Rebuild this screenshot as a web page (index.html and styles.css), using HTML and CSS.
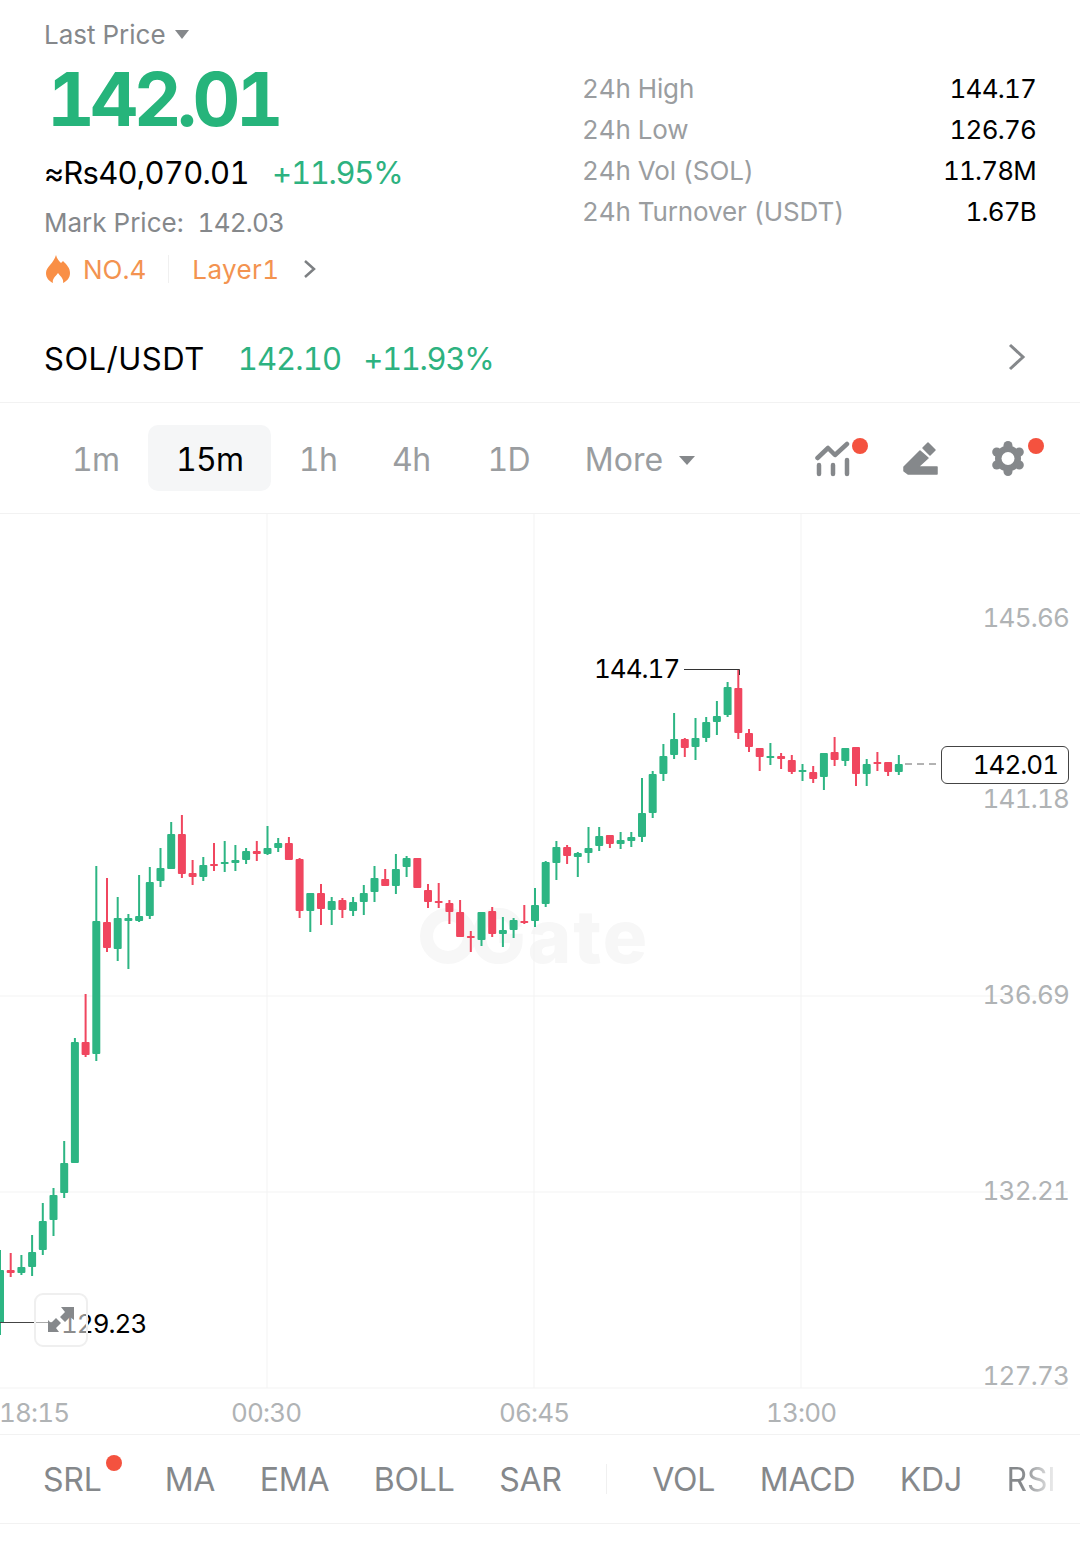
FILE: index.html
```html
<!DOCTYPE html>
<html lang="en">
<head>
  <meta charset="UTF-8">
  <meta name="viewport" content="width=device-width, initial-scale=1.0">
  <title>SOL/USDT Perpetual</title>
  <link rel="stylesheet" href="styles.css">
</head>
<body>
  <section class="summary">
    <div class="summary-left">
      <div class="last-price">Last Price <span class="caret caret-small"></span></div>
      <div class="big-price">142.01</div>
      <div class="convert">
        <span class="convert-value">≈Rs40,070.01</span>
        <span class="green change">+11.95%</span>
      </div>
      <div class="mark-price">Mark Price:&nbsp; <span class="num">142.03</span></div>
      <div class="tags">
        <svg class="fire" width="24" height="28" viewBox="0 0 24 28">
          <path d="M10 0C11 4 13 6 15 8L17 6C21 10 24 13 24 18C24 23 21 26 17 28C18 24 15 22 12 18C9 22 6 24 7 28C3 26 0 23 0 18C0 12 8 8 10 0z"/>
        </svg>
        <span class="tag-text">NO.4</span>
        <span class="tag-divider"></span>
        <span class="tag-text tag-layer">Layer1</span>
        <svg class="chevron-small" width="14" height="20" viewBox="0 0 14 20">
          <path d="M2 2l9 8-9 8"/>
        </svg>
      </div>
    </div>
    <div class="stats">
      <span class="stat-label">24h High</span><span class="stat-value">144.17</span>
      <span class="stat-label">24h Low</span><span class="stat-value">126.76</span>
      <span class="stat-label">24h Vol (SOL)</span><span class="stat-value">11.78M</span>
      <span class="stat-label">24h Turnover (USDT)</span><span class="stat-value">1.67B</span>
    </div>
  </section>

  <section class="pair-row">
    <span class="pair-name">SOL/USDT</span>
    <span class="green pair-price">142.10</span>
    <span class="green change">+11.93%</span>
    <svg class="chevron-large" width="18" height="28" viewBox="0 0 18 28">
      <path d="M2 2l13 12-13 12"/>
    </svg>
  </section>

  <nav class="toolbar">
    <span class="tab tab-1m">1m</span>
    <span class="tab tab-active">15m</span>
    <span class="tab tab-1h">1h</span>
    <span class="tab tab-4h">4h</span>
    <span class="tab tab-1d">1D</span>
    <span class="tab tab-more">More <span class="caret"></span></span>
    <div class="tool-icons">
      <svg class="tool-icon" width="54" height="40" viewBox="0 0 54 40">
        <path class="icon-line" d="M2.500 20L13 10l7 7L32 6"/>
        <path class="icon-line" d="M4 27v9M18 27v9M32 22v14"/>
        <circle class="icon-dot" cx="45" cy="8" r="8"/>
      </svg>
      <svg class="tool-icon tool-pencil" width="36" height="40" viewBox="0 0 36 40">
        <path class="icon-solid" d="M1 29l16-16 8 7-10 9h19v7H5l-4-3zM20 10l5-5 7 7-5 5z"/>
      </svg>
      <svg class="tool-icon" width="54" height="40" viewBox="0 0 54 40">
        <circle class="icon-fill" cx="16" cy="20.500" r="13"/>
        <circle class="icon-fill" cx="16" cy="7.500" r="4.500"/>
        <circle class="icon-fill" cx="16" cy="33.500" r="4.500"/>
        <circle class="icon-fill" cx="4.700" cy="14" r="4.500"/>
        <circle class="icon-fill" cx="27.300" cy="14" r="4.500"/>
        <circle class="icon-fill" cx="4.700" cy="27" r="4.500"/>
        <circle class="icon-fill" cx="27.300" cy="27" r="4.500"/>
        <circle cx="16" cy="20.500" r="6.500" fill="#fff"/>
        <circle class="icon-dot" cx="44" cy="8" r="8"/>
      </svg>
    </div>
  </nav>

  <section class="chart">
    <div class="watermark"><span class="watermark-ring"></span>Gate</div>
    <svg id="candles" class="candles" width="1080" height="920" viewBox="0 514 1080 920"></svg>

    <span class="axis-label axis-1">145.66</span>
    <span class="axis-label axis-2">141.18</span>
    <span class="axis-label axis-3">136.69</span>
    <span class="axis-label axis-4">132.21</span>
    <span class="axis-label axis-5">127.73</span>

    <span class="high-label">144.17</span>
    <span class="low-label">129.23</span>
    <div class="last-box">142.01</div>
    <button class="expand">
      <svg width="28" height="28" viewBox="0 0 28 28">
        <path d="M14 1h13v13l-4-3-5 5-5-5 5-5zM1 14l3 3 5-5 5 5-5 5 3 4H1z"/>
      </svg>
    </button>

    <div class="time-axis">
      <span class="time time-1">18:15</span>
      <span class="time time-2">00:30</span>
      <span class="time time-3">06:45</span>
      <span class="time time-4">13:00</span>
    </div>
  </section>

  <nav class="indicators">
    <span class="ind ind-srl">SRL<i class="ind-dot"></i></span>
    <span class="ind">MA</span>
    <span class="ind">EMA</span>
    <span class="ind">BOLL</span>
    <span class="ind">SAR</span>
    <span class="ind-divider"></span>
    <span class="ind">VOL</span>
    <span class="ind">MACD</span>
    <span class="ind">KDJ</span>
    <span class="ind ind-fade">RSI</span>
  </nav>

  <script src="chart.js"></script>
</body>
</html>
```

FILE: styles.css
```css
body {
  font-family: Inter, "Liberation Sans", sans-serif;
  font-variant-numeric: tabular-nums;
  margin: 0;
  padding: 0;
  background-color: #fff;
  color: #000;
  width: 1080px;
  overflow-x: hidden;
}
.green {
  color: #2db280;
}
.change {
  letter-spacing: -1.300px;
}
.num {
  letter-spacing: -0.800px;
}
.caret {
  display: inline-block;
  width: 0;
  height: 0;
  border-left: 8px solid transparent;
  border-right: 8px solid transparent;
  border-top: 9px solid #85888b;
  vertical-align: 6px;
  margin-left: 7px;
}
.caret-small {
  border-left-width: 7px;
  border-right-width: 7px;
  border-top-width: 9px;
  margin-left: 2px;
  vertical-align: 5px;
}

/* top summary */
.summary {
  display: flex;
  justify-content: space-between;
  height: 316px;
  padding: 0 44px;
  box-sizing: border-box;
}
.last-price {
  margin-top: 18px;
  font-size: 26px;
  line-height: 34px;
  color: #85888b;
}
.big-price {
  margin-top: 2px;
  margin-left: 3px;
  font-size: 74px;
  line-height: 90px;
  font-weight: 700;
  letter-spacing: -4.500px;
  color: #26b47b;
}
.convert {
  margin-top: 9px;
  font-size: 31px;
  line-height: 40px;
}
.convert-value {
  margin-right: 15px;
  letter-spacing: -0.750px;
}
.mark-price {
  margin-top: 12px;
  font-size: 26px;
  line-height: 36px;
  color: #85888b;
}
.tags {
  display: flex;
  align-items: center;
  margin-top: 10px;
  height: 36px;
  font-size: 26px;
  color: #f39350;
}
.tag-layer {
  letter-spacing: 0.400px;
}
.fire {
  margin: 0 13px 0 2px;
  fill: #f98f46;
}
.tag-divider {
  width: 1px;
  height: 28px;
  background-color: #f0f0f0;
  margin: 0 23px 0 22px;
}
.chevron-small {
  margin-left: 23px;
  fill: none;
  stroke: #7d8083;
  stroke-width: 2.500;
}
.stats {
  display: grid;
  grid-template-columns: 1fr auto;
  grid-auto-rows: 41px;
  align-content: start;
  width: 454px;
  margin-top: 68px;
  font-size: 26px;
  line-height: 41px;
}
.stat-label {
  color: #9a9da0;
  letter-spacing: -0.100px;
}
.stat-value {
  text-align: right;
  letter-spacing: -0.800px;
}

/* pair row */
.pair-row {
  display: flex;
  align-items: center;
  height: 84px;
  padding: 0 44px 2px;
  font-size: 31px;
  border-bottom: 1px solid #f2f2f2;
}
.pair-name {
  margin-right: 33px;
  letter-spacing: 0.500px;
}
.pair-price {
  margin-right: 22px;
  letter-spacing: -0.900px;
}
.chevron-large {
  margin-left: auto;
  margin-right: 10px;
  margin-bottom: 2px;
  fill: none;
  stroke: #85888b;
  stroke-width: 3;
}

/* timeframe toolbar */
.toolbar {
  display: flex;
  align-items: center;
  height: 110px;
  font-size: 32px;
  color: #9a9da0;
  border-bottom: 1px solid #f2f2f2;
}
.tab {
  height: 66px;
  line-height: 70px;
  letter-spacing: -0.700px;
}
.tab-1m {
  margin-left: 72px;
}
.tab-active {
  margin-left: 29px;
  padding: 0 27.500px;
  background-color: #f5f6f7;
  border-radius: 10px;
  color: #000;
}
.tab-1h {
  margin-left: 28px;
}
.tab-4h {
  margin-left: 55px;
}
.tab-1d {
  margin-left: 57px;
}
.tab-more {
  margin-left: 55px;
  letter-spacing: 0;
}
.tool-icons {
  display: flex;
  align-items: center;
  margin-left: auto;
  margin-right: 34px;
}
.tool-pencil {
  margin: 0 53px 0 34px;
}
.icon-line {
  fill: none;
  stroke: #85888b;
  stroke-width: 4.500;
  stroke-linecap: round;
  stroke-linejoin: round;
}
.icon-fill {
  fill: #85888b;
}
.icon-solid {
  fill: #85888b;
  stroke: #85888b;
  stroke-width: 1.500;
  stroke-linejoin: round;
}
.icon-dot {
  fill: #f4523f;
}

/* chart */
.chart {
  position: relative;
  height: 921px;
  border-bottom: 1px solid #f2f2f2;
  box-sizing: border-box;
}
.candles {
  position: absolute;
  left: 0;
  top: 0;
}
.watermark {
  position: absolute;
  left: 420px;
  top: 377px;
  display: flex;
  align-items: center;
  font-size: 74px;
  line-height: 90px;
  font-weight: 800;
  letter-spacing: 2px;
  color: #f7f7f7;
}
.watermark-ring {
  width: 56px;
  height: 56px;
  margin-right: -6px;
  box-sizing: border-box;
  border: 13px solid #f7f7f7;
  border-radius: 50%;
}
.axis-label {
  position: absolute;
  right: 11px;
  font-size: 26px;
  line-height: 32px;
  letter-spacing: -0.800px;
  color: #b0b3b5;
}
.axis-1 { top: 88px; }
.axis-2 { top: 269px; }
.axis-3 { top: 465px; }
.axis-4 { top: 661px; }
.axis-5 { top: 846px; }
.high-label,
.low-label {
  position: absolute;
  font-size: 26px;
  line-height: 32px;
  letter-spacing: -1px;
}
.high-label {
  left: 594px;
  top: 139px;
}
.low-label {
  left: 61px;
  top: 794px;
}
.last-box {
  position: absolute;
  left: 941px;
  top: 232px;
  width: 128px;
  height: 38px;
  box-sizing: border-box;
  padding-right: 10px;
  border: 1px solid #444;
  border-radius: 6px;
  background-color: #fff;
  font-size: 26px;
  line-height: 36px;
  letter-spacing: -1px;
  text-align: right;
}
.expand {
  position: absolute;
  left: 34px;
  top: 779px;
  width: 54px;
  height: 54px;
  padding: 0;
  display: flex;
  align-items: center;
  justify-content: center;
  border: 2px solid #efefef;
  border-radius: 9px;
  background-color: rgba(255, 255, 255, 0.55);
}
.expand svg {
  fill: #85888b;
}
.time-axis {
  position: absolute;
  left: 0;
  right: 0;
  top: 874px;
  height: 46px;
  font-size: 26px;
  line-height: 50px;
  letter-spacing: -0.800px;
  color: #b0b3b5;
}
.time {
  position: absolute;
  top: 0;
}
.time-1 { left: -1px; }
.time-2 { left: 231px; }
.time-3 { left: 499px; }
.time-4 { left: 766px; }

/* indicator row */
.indicators {
  display: flex;
  align-items: center;
  height: 88px;
  padding-left: 43px;
  font-size: 32px;
  letter-spacing: -0.200px;
  color: #85888b;
  border-bottom: 1px solid #f2f2f2;
  overflow: hidden;
  white-space: nowrap;
}
.ind {
  margin-right: 44.500px;
}
.ind-srl {
  position: relative;
  margin-right: 63px;
}
.ind-dot {
  position: absolute;
  left: 63px;
  top: -5px;
  width: 16px;
  height: 16px;
  border-radius: 50%;
  background-color: #f4523f;
}
.ind-divider {
  width: 1px;
  height: 30px;
  background-color: #f0f0f0;
  margin-right: 45px;
}
.ind-fade {
  margin: 0;
  background: linear-gradient(90deg, #85888b 30%, #f4f4f4 100%);
  -webkit-background-clip: text;
  background-clip: text;
  color: transparent;
}
```

FILE: chart.js
```js
// each candle: [colour, wick top, wick bottom, body top, body bottom]
const candles = [
  ['g',1250,1335,1270,1323],['r',1253,1277,1270,1273],['g',1255,1275,1267,1273],['g',1235,1276,1252,1267],
  ['g',1203,1255,1221,1250],['g',1188,1236,1195,1220],['g',1141,1198,1163,1193],['g',1038,1163,1042,1163],
  ['r',994,1057,1042,1055],['g',866,1061,921,1054],['r',878,952,922,948],['g',897,961,918,949],
  ['g',914,969,918,921],['g',875,922,916,921],['g',867,919,882,916],['g',848,887,868,881],
  ['g',822,869,834,869],['r',815,878,834,874],['r',860,885,873,877],['g',857,881,865,877],
  ['r',843,871,864,866],['g',841,872,862,864],['g',845,871,860,863],['g',848,864,851,860],
  ['r',841,861,851,854],['g',826,855,848,854],['g',838,852,843,848],['r',837,860,843,860],
  ['r',858,918,859,911],['g',893,932,893,911],['r',884,925,893,909],['g',897,925,901,910],
  ['r',898,918,900,910],['g',897,916,902,911],['g',885,915,893,902],['g',866,902,878,892],
  ['r',869,886,879,886],['g',854,894,869,886],['g',856,877,858,867],['r',858,888,858,888],
  ['r',884,908,890,902],['r',883,908,901,903],['r',900,924,903,912],['r',900,937,912,937],
  ['r',931,952,936,938],['g',912,946,912,940],['r',907,937,911,934],['g',917,947,930,934],
  ['g',918,938,920,930],['r',905,924,921,923],['g',888,927,905,921],['g',861,907,862,904],
  ['g',841,880,847,863],['r',845,864,847,856],['g',852,877,853,857],['g',827,863,848,853],
  ['g',827,851,836,846],['r',835,848,835,844],['g',832,849,840,844],['g',832,847,837,841],
  ['g',778,842,813,837],['g',771,818,774,813],['g',744,781,756,774],['g',713,759,739,755],
  ['r',738,757,739,748],['g',718,760,738,747],['g',717,742,722,738],['g',701,735,716,722],
  ['g',682,717,687,715],['r',669,739,688,733],['r',729,752,733,747],['r',748,771,748,757],
  ['g',743,765,756,758],['r',753,769,756,759],['r',755,774,760,772],['g',764,781,770,772],
  ['r',766,783,772,779],['g',753,790,753,777],['r',737,766,752,760],['g',748,766,748,761],
  ['r',747,786,747,774],['g',759,786,764,774],['r',752,771,762,764],['r',762,776,762,772],
  ['g',755,775,764,772]
];
const colours = { g: '#2db583', r: '#f0465f' };
const svg = document.getElementById('candles');

function add(tag, attrs) {
  const el = document.createElementNS('http://www.w3.org/2000/svg', tag);
  Object.keys(attrs).forEach(k => el.setAttribute(k, attrs[k]));
  svg.appendChild(el);
}

// grid lines
[267, 534, 801].forEach(x => add('line', { x1: x, x2: x, y1: 514, y2: 1388, stroke: '#f3f3f3' }));
[996, 1192, 1388].forEach(y => add('line', { x1: 0, x2: 1068, y1: y, y2: y, stroke: '#f3f3f3' }));

candles.forEach((c, i) => {
  const x = i * 10.7;
  const fill = colours[c[0]];
  add('rect', { x: x - 1, y: c[1], width: 2, height: c[2] - c[1], fill: fill });
  add('rect', { x: x - 4, y: c[3], width: 8, height: Math.max(c[4] - c[3], 2), rx: 1, fill: fill });
});

// high, low and last price leader lines
add('path', { d: 'M684 669.500H739.500V675', fill: 'none', stroke: '#333' });
add('path', { d: 'M0 1322.500H60', fill: 'none', stroke: '#444' });
add('line', { x1: 905, x2: 939, y1: 764, y2: 764, stroke: '#666', 'stroke-dasharray': '7 5' });
```
